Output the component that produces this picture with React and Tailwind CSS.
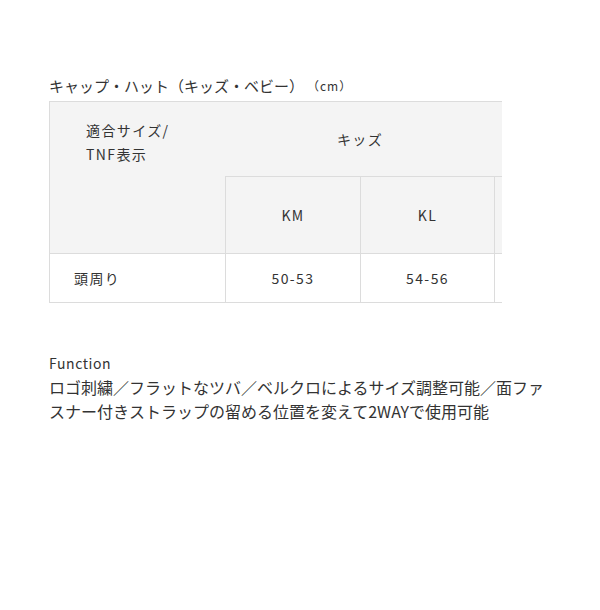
const sizes = [
  { label: "KM", value: "50-53" },
  { label: "KL", value: "54-56" },
];

const App = () => {
  return (
    <div
      className="min-h-[610px] w-[600px] bg-white pl-[49px] pt-[74px] text-[#333]"
      style={{ fontFamily: '"Noto Sans CJK JP", "Noto Sans", sans-serif' }}
    >
      {/* Title */}
      <h3 className="flex h-[24px] items-center text-[15px] font-normal leading-[24px]">
        キャップ・ハット（キッズ・ベビー）
        <span className="ml-[3px] text-[12px] tracking-[0.08em]">（cm）</span>
      </h3>

      <div className="mt-[3px] w-[453px] overflow-hidden">
        <table className="w-[620px] table-fixed border-collapse text-[14px] tracking-[0.1em]">
          <colgroup>
            <col className="w-[176px]" />
            <col className="w-[135px]" />
            <col className="w-[134px]" />
            <col className="w-[175px]" />
          </colgroup>
          <tbody>
            <tr className="h-[75px] bg-[#f4f4f4]">
              <td
                rowSpan={2}
                className="border-l border-t border-[#dcdcdc] pl-[36px] pt-[16px] align-top leading-[24px]"
              >
                適合サイズ/
                <br />
                TNF表示
              </td>
              <td colSpan={2} className="border-t border-[#dcdcdc] text-center">
                キッズ
              </td>
              <td className="border-t border-[#dcdcdc]"></td>
            </tr>
            <tr className="h-[77px] bg-[#f4f4f4]">
              {sizes.map((s) => (
                <td key={s.label} className="border border-[#dcdcdc] text-center">
                  {s.label}
                </td>
              ))}
              <td className="border border-[#dcdcdc]"></td>
            </tr>
            <tr className="h-[49px]">
              <td className="border border-[#dcdcdc] pl-[24px]">頭周り</td>
              {sizes.map((s) => (
                <td key={s.label} className="border border-[#dcdcdc] text-center">
                  {s.value}
                </td>
              ))}
              <td className="border border-[#dcdcdc]"></td>
            </tr>
          </tbody>
        </table>
      </div>

      {/* Function */}
      <div className="mt-[48px] w-[500px]">
        <p className="text-[14px] leading-[24px] tracking-[0.04em]">Function</p>
        <p className="text-[16px] leading-[24px]">
          ロゴ刺繍／フラットなツバ／ベルクロによるサイズ調整可能／面ファスナー付きストラップの留める位置を変えて2WAYで使用可能
        </p>
      </div>
    </div>
  );
};

export default App;
